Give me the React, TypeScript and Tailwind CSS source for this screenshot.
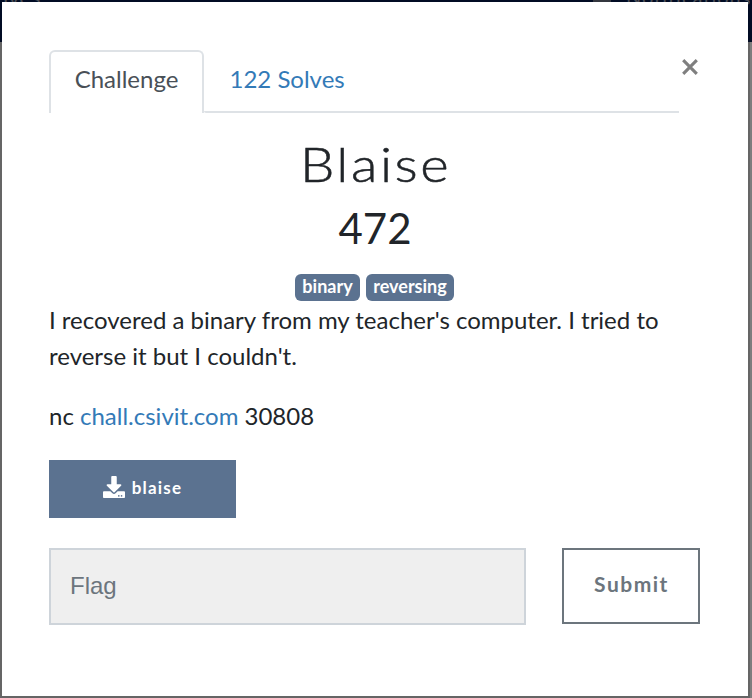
import { FaDownload } from "react-icons/fa";

export default function App() {
  return (
    <div className="relative h-[698px] w-[752px] overflow-hidden bg-[#656565] pt-[2px] pl-[2px] font-['Lato','Liberation_Sans',sans-serif] text-2xl leading-9 text-[#212529]">
      <div className="absolute inset-x-0 top-0 h-[42px] overflow-hidden bg-[#010c24]">
        <span className="absolute -top-[15px] left-[3px] text-[22px] leading-6 text-[#4a4d55]">ives</span>
        <span className="absolute top-0 left-[593px] h-[2px] w-[18px] bg-[#34373f]" />
        <span className="absolute -top-[15px] left-[626px] text-[20px] leading-6 tracking-[1px] text-[#4a4d55]">Notifications</span>
      </div>
      <div className="absolute top-[42px] right-0 bottom-0 w-[2px] bg-[#7d7d7d]" />

      <main className="relative flex h-[694px] w-[746px] flex-col bg-white pt-12 pr-[48px] pl-[47px]">
        <header className="flex justify-between">
          <nav className="flex h-[63px] w-[630px]">
            <button className="h-[63px] w-[155px] rounded-t-[6px] border-2 border-b-0 border-[#dee2e6] pb-[8px] text-[#495057]">
              Challenge
            </button>
            <a className="flex-1 rounded-bl-[2px] border-b-2 border-[#dee2e6] pt-[11px] pl-[25.5px] text-[#337ab7]">122 Solves</a>
          </nav>
          <button aria-label="Close" className="mt-[9px] mr-[2px] flex h-4 w-4 text-[#7f7f7f]">
            <svg viewBox="0 0 16 16" className="h-4 w-4" stroke="currentColor" strokeWidth="3.1">
              <path d="M1.2 1.2 14.8 14.8M14.8 1.2 1.2 14.8" />
            </svg>
          </button>
        </header>

        <h3 className="mt-[22px] h-[58px] origin-center scale-x-[1.16] pl-[2px] text-center text-[47px] leading-[59px] font-light tracking-[2.2px] [-webkit-text-stroke:0.5px_#212529]">
          Blaise
        </h3>
        <h4 className="mt-[10px] h-[50px] pl-px text-center text-[42px] leading-[50px]">472</h4>

        <div className="mt-[21px] flex h-[27px] justify-center gap-[6px] text-lg leading-[25px] font-bold text-white">
          <span className="w-[65px] rounded-[6px] bg-[#5b7290] text-center">binary</span>
          <span className="w-[88px] rounded-[6px] bg-[#5b7290] text-center">reversing</span>
        </div>

        <p className="mt-px whitespace-nowrap">
          I recovered a binary from my teacher's computer. I tried to
          <br />
          reverse it but I couldn't.
        </p>
        <p className="mt-6">
          nc <a className="text-[#337ab7]">chall.csivit.com</a> 30808
        </p>

        <a className="mt-[26px] flex h-[58px] w-[187px] items-center justify-center gap-[7px] bg-[#5b7290] pb-[2px] text-[17px] font-bold tracking-[1.2px] text-white">
          <FaDownload className="-mt-[3px] h-[22px] w-[22px]" />
          blaise
        </a>

        <div className="mt-[30px] flex justify-between">
          <input
            placeholder="Flag"
            className="h-[77px] w-[477px] border-2 border-[#ced4da] bg-[#efefef] px-[19px] pb-[2px] font-['Liberation_Sans',Arial,sans-serif] text-2xl outline-none placeholder:text-[#6c757d]"
          />
          <button className="h-[76px] w-[138px] border-2 border-[#6c757d] pb-[4px] pl-[1px] text-[21px] font-bold tracking-[1.5px] text-[#6c757d]">
            Submit
          </button>
        </div>
      </main>
    </div>
  );
}
